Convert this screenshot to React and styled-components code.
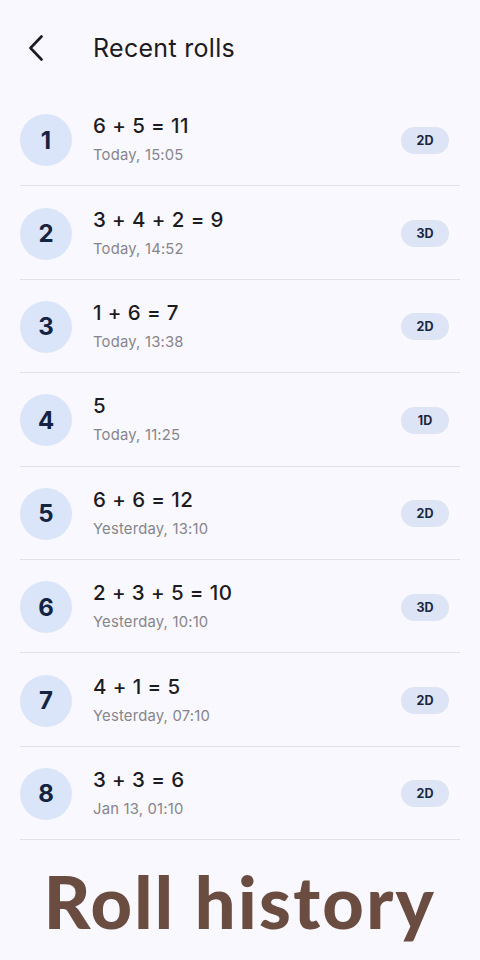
import React from "react";
import styled, { createGlobalStyle } from "styled-components";

const GlobalStyle = createGlobalStyle`
  html, body {
    margin: 0;
    padding: 0;
    background: #f9f8fe;
    font-family: Inter, "Noto Sans", sans-serif;
    overflow: hidden;
  }
`;

const Screen = styled.div`
  width: 480px;
  height: 960px;
  overflow: hidden;
  background: #f9f8fe;
`;

const TopBar = styled.header`
  height: 93px;
  display: flex;
  align-items: center;
  padding-left: 24px;
  box-sizing: border-box;
  padding-top: 3px;
`;

const BackButton = styled.button`
  width: 24px;
  height: 32px;
  border: none;
  background: none;
  padding: 0;
  display: flex;
  align-items: center;
  justify-content: center;
  margin-right: 45px;
  color: #1c1b1f;
`;

const Title = styled.h1`
  margin: 0;
  font-size: 25px;
  font-weight: 400;
  color: #1c1b1f;
  letter-spacing: 0.3px;
`;

const List = styled.ul`
  list-style: none;
  margin: 0;
  padding: 0 20px;
`;

const Row = styled.li`
  height: 93.4px;
  box-sizing: border-box;
  display: flex;
  align-items: center;
  border-bottom: 1px solid #e2e1e8;
  padding-top: 2px;
`;

const Avatar = styled.div`
  width: 52px;
  height: 52px;
  border-radius: 50%;
  background: #dbe5fa;
  color: #132341;
  font-size: 24px;
  font-weight: 700;
  display: flex;
  align-items: center;
  justify-content: center;
  flex-shrink: 0;
  margin-right: 21px;
`;

const Texts = styled.div`
  flex: 1;
  display: flex;
  flex-direction: column;
  gap: 8px;
  margin-top: -3px;
`;

const Expr = styled.div`
  font-size: 20.5px;
  font-weight: 500;
  color: #1c1b1f;
  letter-spacing: 0.4px;
`;

const When = styled.div`
  font-size: 14.8px;
  color: #86858c;
  letter-spacing: 0.2px;
`;

const Badge = styled.span`
  width: 48px;
  height: 27px;
  border-radius: 14px;
  background: #dce4f5;
  color: #1b2640;
  font-size: 12.5px;
  font-weight: 700;
  display: flex;
  align-items: center;
  justify-content: center;
  margin-right: 11px;
`;

const Caption = styled.div`
  height: 110px;
  display: flex;
  align-items: center;
  justify-content: center;
  font-family: Lato, "Open Sans", sans-serif;
  font-weight: 900;
  font-size: 72px;
  color: #6b4c40;
  letter-spacing: 2.3px;
  padding-top: 12px;
  box-sizing: border-box;
`;

const rolls = [
  { expr: "6 + 5 = 11", when: "Today, 15:05", dice: "2D" },
  { expr: "3 + 4 + 2 = 9", when: "Today, 14:52", dice: "3D" },
  { expr: "1 + 6 = 7", when: "Today, 13:38", dice: "2D" },
  { expr: "5", when: "Today, 11:25", dice: "1D" },
  { expr: "6 + 6 = 12", when: "Yesterday, 13:10", dice: "2D" },
  { expr: "2 + 3 + 5 = 10", when: "Yesterday, 10:10", dice: "3D" },
  { expr: "4 + 1 = 5", when: "Yesterday, 07:10", dice: "2D" },
  { expr: "3 + 3 = 6", when: "Jan 13, 01:10", dice: "2D" },
];

export default function App() {
  return (
    <Screen>
      <GlobalStyle />
      <TopBar>
        <BackButton aria-label="Back">
          <svg width="16" height="26" viewBox="0 0 16 26" fill="none">
            <path d="M13.5 1.5 L2.5 13 L13.5 24.5" stroke="currentColor" strokeWidth="2.6" strokeLinecap="round" strokeLinejoin="round" />
          </svg>
        </BackButton>
        <Title>Recent rolls</Title>
      </TopBar>
      <List>
        {rolls.map((r, i) => (
          <Row key={i}>
            <Avatar>{i + 1}</Avatar>
            <Texts>
              <Expr>{r.expr}</Expr>
              <When>{r.when}</When>
            </Texts>
            <Badge>{r.dice}</Badge>
          </Row>
        ))}
      </List>
      <Caption>Roll history</Caption>
    </Screen>
  );
}
